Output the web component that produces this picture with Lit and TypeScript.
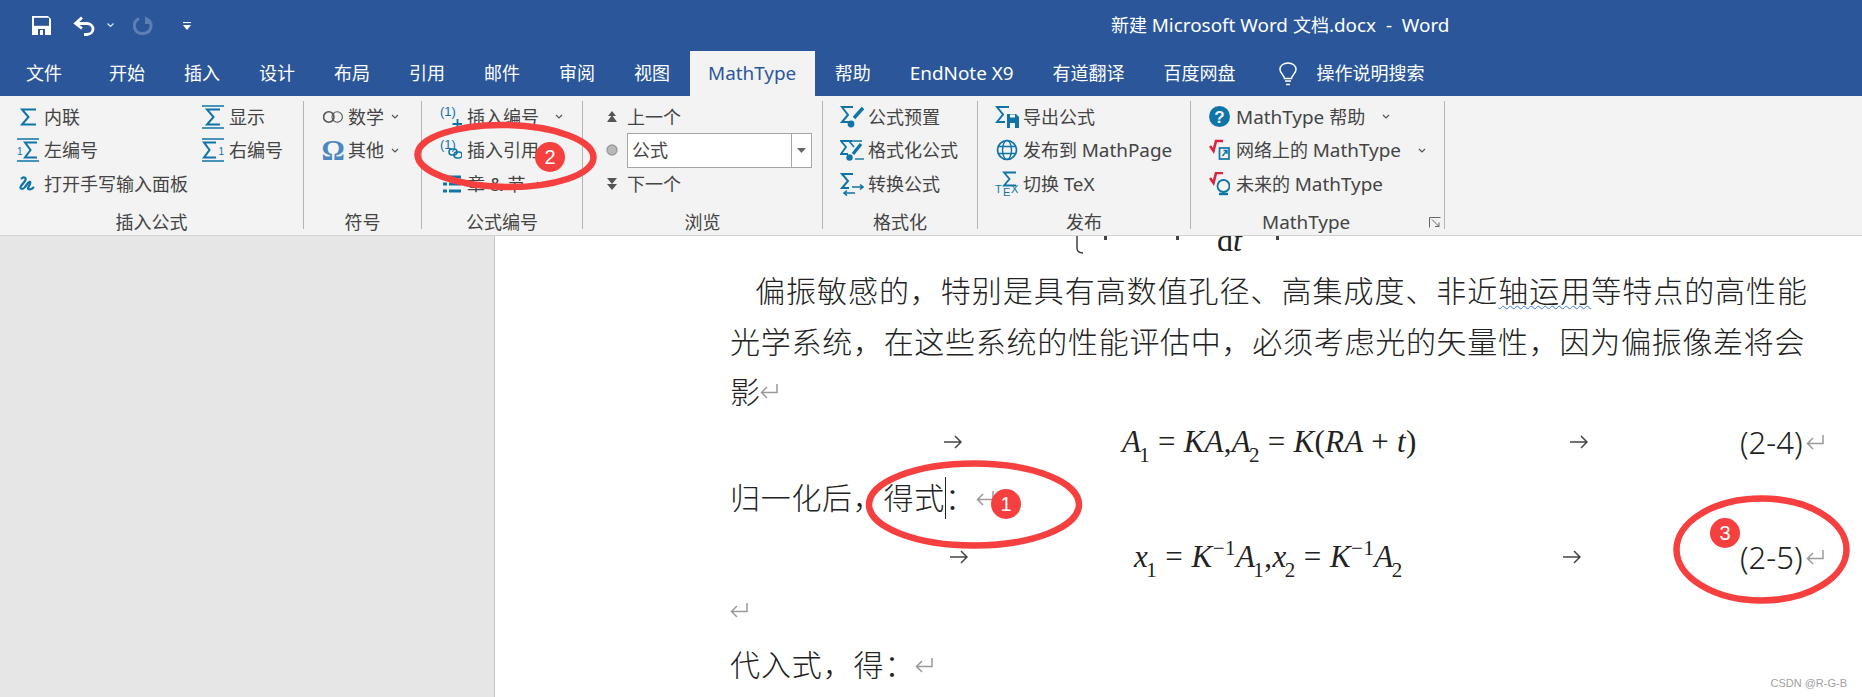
import { LitElement, html, css, svg } from "lit";
import { customElement } from "lit/decorators.js";

const CM = "\uFF0C";
const CL = "\uFF1A";

const S = (d: string, w = 2) => svg`<path d=${d} fill="none" stroke="currentColor" stroke-width=${w}/>`;
const ic = (w: number, h: number, body: unknown) =>
  html`<svg class="ic" width=${w} height=${h} viewBox="0 0 ${w} ${h}">${body}</svg>`;
const T = (x: number, y: number, s: number, t: string) =>
  svg`<text x=${x} y=${y} font-size=${s} fill="currentColor" font-family="Liberation Sans, sans-serif">${t}</text>`;
const mix = (text: string) =>
  text.split(/([A-Za-z][A-Za-z0-9 .]*)/).map((p, i) => (i % 2 ? html`<span class="la">${p}</span>` : p));

const icons = {
  inline: ic(22, 20, svg`${S("M19 2.5H5L11.5 10L5 17.5H19", 2)}`),
  display: ic(22, 24, svg`${S("M0 1H22M0 23H22", 1.6)}${S("M18 4.5H5L11.5 12L5 19.5H18", 2)}`),
  left: ic(22, 24, svg`${S("M0 1H22M0 23H22", 1.6)}${S("M20 4.5H8L13.5 12L8 19.5H20", 2)}${T(0, 17, 10, "1")}`),
  right: ic(22, 24, svg`${S("M0 1H22M0 23H22", 1.6)}${S("M14 4.5H2L7.5 12L2 19.5H14", 2)}${T(16.5, 17, 10, "1")}`),
  hand: ic(22, 18, svg`${S("M4 4c3-3 6-1 4 2l-4 5c-2 3 2 4 4 1l3-4c2-2 3-1 2 1l-2 4c0 2 3 2 6-1", 2.2)}`),
  inf: html`<svg class="ic dark" width="20" height="18" viewBox="0 0 20 18"><circle cx="5.8" cy="9" r="5.2" fill="none" stroke="currentColor" stroke-width="1.6"/><circle cx="14.2" cy="9" r="5.2" fill="none" stroke="currentColor" stroke-width="1.1"/></svg>`,
  omega: html`<span class="omega">Ω</span>`,
  num: ic(22, 24, svg`${T(0, 11, 13, "(1)")}${S("M17.5 14V24M12.5 19H22.5", 1.8)}`),
  ref: ic(22, 24, svg`${T(0, 11, 13, "(1)")}<rect x="9" y="11" width="8" height="6" rx="3" fill="none" stroke="currentColor" stroke-width="1.5"/><rect x="14" y="14" width="8" height="6" rx="3" fill="none" stroke="currentColor" stroke-width="1.5"/>`),
  list: ic(22, 24, svg`${S("M3 5H7M9 5H21M3 12H7M9 12H21M3 19H7M9 19H21", 3)}`),
  up: html`<svg class="ic dark" width="12" height="12" viewBox="0 0 12 12"><path d="M6 0L10 5H2ZM6 4L11 11H1Z" fill="currentColor"/></svg>`,
  down: html`<svg class="ic dark" width="12" height="12" viewBox="0 0 12 12"><path d="M1 0H11L6 6ZM1 6H11L6 12Z" fill="currentColor"/></svg>`,
  radio: html`<svg class="ic" width="12" height="12" viewBox="0 0 12 12"><circle cx="6" cy="6" r="5" fill="#b8b8b8" stroke="#9c9c9c" stroke-width="1.4"/></svg>`,
  preset: ic(24, 24, svg`${S("M13 2H2L8 10L2 17H9", 2)}${S("M23 3L14 13", 3.4)}<circle cx="11" cy="19" r="3.4" fill="currentColor"/>`),
  format: ic(24, 24, svg`${S("M12 3H1L6 9L1 16H8", 1.8)}${S("M22 3H9L14 9", 1.6)}${S("M21 6L13 16", 3.2)}<circle cx="9.5" cy="19.5" r="3.2" fill="currentColor"/>${S("M15 21H24", 1.4)}`),
  convert: ic(24, 24, svg`${S("M13 2H2L8 9L2 16H9", 2)}${S("M12 15H23M20 12.5L23 15L20 17.5M4 21H15M7 18.5L4 21L7 23.5", 1.6)}`),
  exportI: ic(24, 24, svg`${S("M14 2H2L8 9.5L2 17H10", 2)}<path d="M12 9H21L24 12V23H12Z" fill="currentColor"/><rect x="15" y="9.5" width="5" height="3" fill="#f3f3f3"/><rect x="15" y="18" width="5" height="5" fill="#f3f3f3"/>`),
  globe: ic(24, 24, svg`<circle cx="12" cy="12" r="9.5" fill="none" stroke="currentColor" stroke-width="1.7"/><ellipse cx="12" cy="12" rx="4.5" ry="9.5" fill="none" stroke="currentColor" stroke-width="1.4"/>${S("M3 8.5H21M3 15.5H21", 1.4)}`),
  tex: ic(24, 26, svg`${S("M21 1.5H9L14.5 8L9 14.5H21", 1.8)}${T(0, 22, 11, "T")}${T(8, 25, 11, "E")}${T(16, 22, 11, "X")}`),
  help: html`<svg class="ic" width="21" height="21" viewBox="0 0 21 21"><circle cx="10.5" cy="10.5" r="10.5" fill="currentColor"/><text x="10.5" y="16.5" text-anchor="middle" font-size="17" font-weight="700" fill="#f3f3f3" font-family="Liberation Sans, sans-serif">?</text></svg>`,
  web: html`<svg class="ic" width="21" height="22" viewBox="0 0 21 22"><path d="M1 7L4.5 12L7 2H14" fill="none" stroke="#d8243c" stroke-width="2.6"/><rect x="10.5" y="9" width="9.5" height="11" fill="none" stroke="currentColor" stroke-width="1.7"/><path d="M13.5 17L17.5 12M14.5 11.5H18V15" fill="none" stroke="currentColor" stroke-width="1.4"/></svg>`,
  future: html`<svg class="ic" width="21" height="24" viewBox="0 0 21 24"><path d="M1 6L4.5 11L7 1H14" fill="none" stroke="#d8243c" stroke-width="2.6"/><circle cx="14.5" cy="14" r="6" fill="none" stroke="currentColor" stroke-width="1.8"/><path d="M10 22H19" stroke="currentColor" stroke-width="2.4"/></svg>`,
};

const chev = (cls: string) => html`<svg class="chev ${cls}" width="8" height="5" viewBox="0 0 8 5"><path d="M1 1L4 4L7 1" fill="none" stroke="currentColor" stroke-width="1.2"/></svg>`;
const ret = html`<svg class="ret" width="18" height="15" viewBox="0 0 18 15"><path d="M17 0V8.5H2M7 3L1.5 8.5L7 14" fill="none" stroke="currentColor" stroke-width="1.5"/></svg>`;
const tab = (cls: string) => html`<svg class="tabarrow ${cls}" width="18" height="14" viewBox="0 0 18 14"><path d="M0 7H17M11 1L17 7L11 13" fill="none" stroke="currentColor" stroke-width="1.5"/></svg>`;

@customElement("app-root")
export class AppRoot extends LitElement {
  static styles = css`
    :host {
      display: block;
      position: relative;
      width: 1862px;
      height: 697px;
      overflow: hidden;
      background: #fff;
      font-family: "Noto Sans", "Noto Sans CJK SC", sans-serif;
    }
    .la { font-size: 1.05em; }
    .titlebar { height: 51px; background: #2b579a; color: #fff; display: flex; align-items: center; padding-left: 32px; box-sizing: border-box; }
    .titlebar svg { display: block; flex: none; }
    .undo { margin-left: 22px; }
    .mini { margin-left: 12px; }
    .redo { margin-left: 19px; }
    .qat { margin-left: 30px; }
    .title { margin: -2px 0 0 920px; font-size: 18px; white-space: pre; line-height: 24px; }

    .tabs { height: 45px; background: #2b579a; display: flex; color: #fff; font-size: 18px; padding-left: 6.5px; box-sizing: border-box; }
    .tab { padding: 0 19.5px; line-height: 44px; white-space: nowrap; }
    .tab.first { margin-right: 8px; }
    .tab.active { background: #f3f3f3; color: #2b579a; padding: 0 19px 0 18.5px; }
    .tab.baidu { padding-right: 0; }
    .bulb { margin: 11px 20px 0 43px; flex: none; display: block; }
    .tell { line-height: 44px; }

    .ribbon { height: 140px; box-sizing: border-box; background: #f3f3f3; border-bottom: 1px solid #d2d2d2; display: flex; color: #444; font-size: 18px; }
    .group { height: 128px; margin-top: 5px; border-right: 1.5px solid #b4b4b4; box-sizing: border-box; display: flex; flex-direction: column; flex: none; }
    .g1 { width: 304px; } .g2 { width: 118px; } .g3 { width: 161px; } .g4 { width: 240px; }
    .g5 { width: 155px; } .g6 { width: 213px; } .g7 { width: 254px; }
    .rows { display: grid; grid-template-rows: 33px 34px 33px; height: 100px; flex: none; margin-top: -1px; }
    .g1 .rows { grid-template-columns: 185px 1fr; padding-left: 17px; }
    .g1 .span2 { grid-column: 1 / 3; }
    .g2 .rows { padding-left: 19px; }
    .g3 .rows { padding-left: 18px; }
    .g4 .rows { padding-left: 23px; }
    .g5 .rows { padding-left: 17px; }
    .g6 .rows { padding-left: 17px; }
    .g7 .rows { padding-left: 18px; }
    .item { display: flex; align-items: center; white-space: nowrap; line-height: 24px; gap: 5px; }
    .g4 .item { gap: 9px; }
    .g5 .item, .g6 .item { gap: 4px; }
    .g7 .item { gap: 6px; }
    .ic { flex: none; display: block; color: #0f74a8; }
    .ic.dark { color: #555; }
    .box { flex: none; width: 22px; display: flex; justify-content: center; }
    .g2 .box { width: 20px; }
    .g5 .box, .g6 .box { width: 24px; }
    .g7 .box { width: 21px; }
    .g4 .box { width: 12px; }
    .omega { color: #4a86bf; font: 700 29px/24px "Liberation Serif", serif; }
    .chev { flex: none; color: #555; }
    .c2 { margin-left: 2px; } .c4 { margin-left: 5px; } .c10 { margin-left: 11px; }
    .label { text-align: center; margin-top: 9px; line-height: 26px; font-size: 18px; }
    .label.flexed { display: flex; align-items: center; padding-left: 71px; padding-right: 3px; text-align: left; }
    .launch { margin-left: auto; display: block; color: #666; }
    .combo { flex: none; width: 185px; height: 35px; box-sizing: border-box; background: #fff; border: 1px solid #a6a6a6; display: flex; align-items: center; }
    .combo .txt { flex: 1; padding-left: 4px; }
    .combo .drop { width: 19px; height: 100%; border-left: 1px solid #a6a6a6; display: flex; align-items: center; justify-content: center; }

    .body { display: flex; height: 461px; }
    .pane { width: 494px; flex: none; background: #e6e6e6; border-right: 1px solid #c6c6c6; }
    .page { flex: 1; padding-left: 235px; color: #222; font-size: 30px; font-weight: 300; }
    .row { display: flex; align-items: center; white-space: nowrap; line-height: 40px; }
    .ret { flex: none; color: #9a9a9a; display: block; }
    .tabarrow { flex: none; color: #444; display: block; }
    .r0 { height: 30px; align-items: flex-start; overflow: hidden; }
    .r1 { height: 50px; letter-spacing: 0.97px; padding-left: 25px; }
    .r2 { height: 51px; letter-spacing: 0.72px; }
    .r3 { height: 49px; }
    .r4 { height: 52px; }
    .r5 { height: 60px; letter-spacing: 0.7px; }
    .r6 { height: 58px; }
    .r7 { height: 48px; }
    .r8 { height: 62px; letter-spacing: 0.9px; }
    .wavy { text-decoration: underline wavy #3f78e6 1.2px; text-underline-offset: 3px; }
    .brace { margin-left: 345px; flex: none; display: block; }
    .tick { flex: none; width: 3px; height: 4px; background: #444; }
    .t1 { margin-left: 19px; } .t2 { margin-left: 69px; } .t3 { margin-left: 32px; }
    .dt { margin: -11px 0 0 38px; width: 27px; font: 32px/30px "Liberation Serif", serif; color: #222; }
    .dt i { font-style: italic; }
    .eq { flex: none; font: italic 31px/40px "Liberation Serif", serif; color: #222; display: flex; align-items: center; }
    .eq span { white-space: pre; }
    .eq .r { font-style: normal; }
    .eq sub, .eq sup { font: 21px/1 "Liberation Serif", serif; vertical-align: baseline; position: relative; }
    .eq sub { top: 10px; margin-left: -2px; }
    .eq sup { top: -12px; }
    .e1 { width: 292px; letter-spacing: 0.25px; } .e2 { width: 268px; letter-spacing: 0.45px; }
    .num { flex: none; width: 65px; font: 300 31px/40px "Noto Sans", sans-serif; color: #222; }
    .m214 { margin-left: 214px; } .m160 { margin-left: 160px; } .a1 { margin-left: 155.5px; } .m152 { margin-left: 152.5px; }
    .m219 { margin-left: 219.5px; } .m166 { margin-left: 166.5px; } .a2 { margin-left: 161px; } .m158 { margin-left: 159px; }
    .rr { flex: none; margin-left: 1px; }
    .caret { flex: none; width: 1px; height: 42px; background: #222; margin-right: -1px; }
    .mark { position: absolute; inset: 0; pointer-events: none; }
    .badge { position: absolute; width: 30px; height: 30px; border-radius: 50%; background: #f63f3f; color: #fff; font: 20px/30px "Liberation Sans", sans-serif; text-align: center; }
    .b1 { left: 991px; top: 489px; }
    .b2 { left: 535px; top: 142px; }
    .b3 { left: 1710px; top: 518px; }
    .wm { position: absolute; right: 15px; top: 676px; font: 11px/14px "Liberation Sans", sans-serif; color: #a0a0a0; }
  `;

  item(icon: unknown, text: string, after: unknown = "", cls = "") {
    return html`<div class="item ${cls}"><span class="box">${icon}</span><span>${mix(text)}</span>${after}</div>`;
  }

  render() {
    return html`
      <div class="titlebar">
        <svg width="19" height="19" viewBox="0 0 19 19"><path d="M0 0H16L19 3V19H0Z" fill="#fff"/><rect x="2" y="1.8" width="15" height="8" fill="#2b579a"/><rect x="6" y="13" width="7" height="6" fill="#2b579a"/><rect x="8" y="14" width="3" height="5" fill="#fff"/></svg>
        <svg class="undo" width="22" height="20" viewBox="0 0 22 20"><path d="M9 1.5L2.5 7.5L9 12.5M3 7.5H14C22 8 22 18 14 18.5H11" fill="none" stroke="#fff" stroke-width="2.8"/></svg>
        <svg class="mini" width="7" height="5" viewBox="0 0 7 5"><path d="M.5 .5L3.5 3.5L6.5 .5" fill="none" stroke="#dfe6f1" stroke-width="1.2"/></svg>
        <svg class="redo" width="20" height="19" viewBox="0 0 20 19"><path d="M6 2.5C-2 7 1 18 10 17.5C19 17 21 6 13 2.5" fill="none" stroke="#5d7fb3" stroke-width="3"/><path d="M12 0V8H19Z" fill="#5d7fb3"/></svg>
        <svg class="qat" width="8" height="8" viewBox="0 0 8 8"><path d="M0 .5H8" stroke="#fff" stroke-width="1.2"/><path d="M0 3H8L4 8Z" fill="#fff"/></svg>
        <div class="title">新建 <span class="la">Microsoft Word </span>文档<span class="la">.docx  -  Word</span></div>
      </div>
      <div class="tabs">
        <div class="tab first">文件</div>
        <div class="tab">开始</div><div class="tab">插入</div><div class="tab">设计</div>
        <div class="tab">布局</div><div class="tab">引用</div><div class="tab">邮件</div>
        <div class="tab">审阅</div><div class="tab">视图</div>
        <div class="tab active"><span class="la">MathType</span></div>
        <div class="tab">帮助</div><div class="tab"><span class="la">EndNote X9</span></div><div class="tab">有道翻译</div>
        <div class="tab baidu">百度网盘</div>
        <svg class="bulb" width="18" height="24" viewBox="0 0 18 24"><path d="M5.5 16.5C4.5 12 1 11 1 7.5C1 3.5 4.5 1 9 1S17 3.5 17 7.5C17 11 13.5 12 12.5 16.5ZM6 19H12M7 22.5H11" fill="none" stroke="#fff" stroke-width="1.5"/></svg>
        <div class="tell">操作说明搜索</div>
      </div>
      <div class="ribbon">
        <section class="group g1">
          <div class="rows">
            ${this.item(icons.inline, "内联")}${this.item(icons.display, "显示")}
            ${this.item(icons.left, "左编号")}${this.item(icons.right, "右编号")}
            ${this.item(icons.hand, "打开手写输入面板", "", "span2")}
          </div>
          <div class="label">插入公式</div>
        </section>
        <section class="group g2">
          <div class="rows">
            ${this.item(icons.inf, "数学", chev("c2"))}
            ${this.item(icons.omega, "其他", chev("c2"))}
            <div></div>
          </div>
          <div class="label">符号</div>
        </section>
        <section class="group g3">
          <div class="rows">
            ${this.item(icons.num, "插入编号", chev("c10"))}
            ${this.item(icons.ref, "插入引用")}
            ${this.item(icons.list, "章 & 节", chev("c4"))}
          </div>
          <div class="label">公式编号</div>
        </section>
        <section class="group g4">
          <div class="rows">
            ${this.item(icons.up, "上一个")}
            <div class="item"><span class="box">${icons.radio}</span>
              <div class="combo"><div class="txt">公式</div><div class="drop"><svg width="9" height="5" viewBox="0 0 9 5"><path d="M0 0H9L4.5 5Z" fill="#666"/></svg></div></div>
            </div>
            ${this.item(icons.down, "下一个")}
          </div>
          <div class="label">浏览</div>
        </section>
        <section class="group g5">
          <div class="rows">
            ${this.item(icons.preset, "公式预置")}
            ${this.item(icons.format, "格式化公式")}
            ${this.item(icons.convert, "转换公式")}
          </div>
          <div class="label">格式化</div>
        </section>
        <section class="group g6">
          <div class="rows">
            ${this.item(icons.exportI, "导出公式")}
            ${this.item(icons.globe, "发布到 MathPage")}
            ${this.item(icons.tex, "切换 TeX")}
          </div>
          <div class="label">发布</div>
        </section>
        <section class="group g7">
          <div class="rows">
            ${this.item(icons.help, "MathType 帮助", chev("c10"))}
            ${this.item(icons.web, "网络上的 MathType", chev("c10"))}
            ${this.item(icons.future, "未来的 MathType")}
          </div>
          <div class="label flexed"><span class="la">MathType</span>
            <svg class="launch" width="12" height="11" viewBox="0 0 12 11"><path d="M.5 10.5V.5H11.5M3 2.5L10 9.5M6 9.5H10V5.5" fill="none" stroke="currentColor" stroke-width="1"/></svg>
          </div>
        </section>
      </div>
      <div class="body">
        <div class="pane"></div>
        <div class="page">
          <div class="row r0">
            <svg class="brace" width="10" height="18" viewBox="0 0 10 18"><path d="M2 0V12C2 15 4 17 8 17" fill="none" stroke="#333" stroke-width="1.4"/></svg>
            <div class="tick t1"></div><div class="tick t2"></div>
            <div class="dt">d<i>t</i></div>
            <div class="tick t3"></div>
          </div>
          <div class="row r1"><span>偏振敏感的${CM}特别是具有高数值孔径、高集成度、非近<span class="wavy">轴运用</span>等特点的高性能</span></div>
          <div class="row r2"><span>光学系统${CM}在这些系统的性能评估中${CM}必须考虑光的矢量性${CM}因为偏振像差将会</span></div>
          <div class="row r3"><span>影</span>${ret}</div>
          <div class="row r4">
            ${tab("m214")}
            <div class="eq e1 m160"><span>A<sub>1</sub><span class="r"> = </span>KA<span class="r">,</span>A<sub>2</sub><span class="r"> = </span>K<span class="r">(</span>RA<span class="r"> + </span>t<span class="r">)</span></span></div>
            ${tab("a1")}
            <div class="num m152">(2-4)</div><span class="rr">${ret}</span>
          </div>
          <div class="row r5"><span>归一化后${CM}得式</span><div class="caret"></div><span>${CL}</span>${ret}</div>
          <div class="row r6">
            ${tab("m219")}
            <div class="eq e2 m166"><span>x<sub>1</sub><span class="r"> = </span>K<sup>−1</sup>A<sub>1</sub><span class="r">,</span>x<sub>2</sub><span class="r"> = </span>K<sup>−1</sup>A<sub>2</sub></span></div>
            ${tab("a2")}
            <div class="num m158">(2-5)</div><span class="rr">${ret}</span>
          </div>
          <div class="row r7">${ret}</div>
          <div class="row r8"><span>代入式${CM}得${CL}</span>${ret}</div>
        </div>
      </div>
      <svg class="mark" width="1862" height="697" viewBox="0 0 1862 697">
        <g fill="none" stroke="#f63f3f" stroke-width="6.5">
          <ellipse cx="505.5" cy="156" rx="88" ry="31" transform="rotate(1 505 156)"/>
          <ellipse cx="974" cy="504.5" rx="105" ry="41"/>
          <ellipse cx="1761.5" cy="549.5" rx="85" ry="51"/>
        </g>
      </svg>
      <div class="badge b1">1</div>
      <div class="badge b2">2</div>
      <div class="badge b3">3</div>
      <div class="wm">CSDN @R-G-B</div>
    `;
  }
}
